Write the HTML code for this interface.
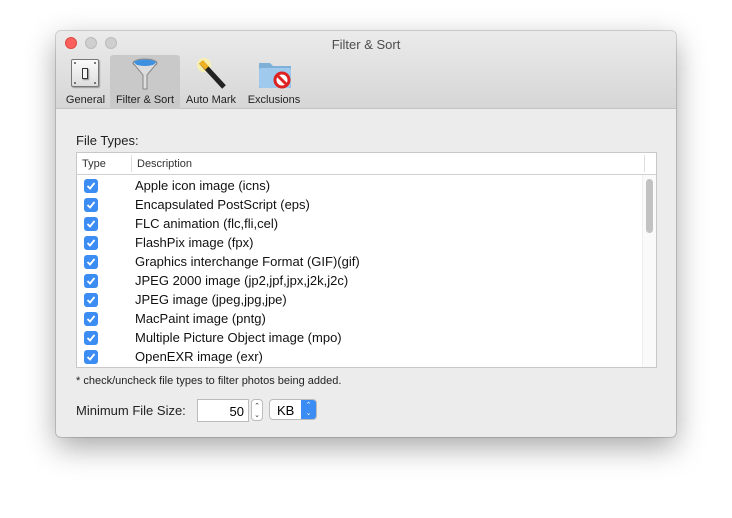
<!DOCTYPE html>
<html><head><meta charset="utf-8"><style>
*{margin:0;padding:0;box-sizing:border-box}
body{width:732px;height:518px;background:#fff;font-family:"Liberation Sans",sans-serif;position:relative;overflow:hidden}
.win{position:absolute;left:56px;top:31px;width:620px;height:406px;background:#ececec;border-radius:5px;box-shadow:0 10px 30px rgba(0,0,0,.35),0 0 0 1px rgba(0,0,0,.15);overflow:hidden}
.bar{position:absolute;left:0;top:0;width:620px;height:78px;background:linear-gradient(#ebebeb,#d6d6d6);border-bottom:1px solid #c4c4c4}
.title{position:absolute;top:6px;width:100%;text-align:center;font-size:13px;color:#4d4d4d}
.dot{position:absolute;top:6px;width:12px;height:12px;border-radius:50%}
.tab{position:absolute;top:24px;height:54px;font-size:11px;color:#222;text-align:center}
.tab span{position:absolute;bottom:3px;left:0;right:0}
.sel{background:#c9c9c9;border-radius:3px 3px 0 0}
.lbl{position:absolute;font-size:13px;color:#222}
.table{position:absolute;left:20px;top:121px;width:581px;height:216px;background:#fff;border:1px solid #c8c8c8}
.hdr{height:22px;border-bottom:1px solid #d0d0d0;font-size:11px;color:#333;position:relative}
.row{position:absolute;left:0;height:19px;font-size:13px;color:#111}
.cb{position:absolute;left:7px;top:3px;width:14px;height:14px;border-radius:3px;background:#3b8df4}
.cb svg{position:absolute;left:2px;top:2px}
.row .t{position:absolute;left:58px;top:2px;white-space:nowrap}
.sc{position:absolute;width:2px;height:2px;border-radius:50%;background:#555}
</style></head><body>
<div class="win">
<div class="bar">
<div class="dot" style="left:9px;background:#fc605c;border:1px solid #de4a44"></div>
<div class="dot" style="left:29px;background:#cfcfcf;border:1px solid #bbb"></div>
<div class="dot" style="left:49px;background:#cfcfcf;border:1px solid #bbb"></div>
<div class="title">Filter &amp; Sort</div>
<div class="tab" style="left:7px;width:45px">
<div style="position:absolute;left:8px;top:4px;width:28px;height:28px;background:linear-gradient(#fafafa,#ddd);border:1px solid #777;border-radius:2px;box-shadow:1px 1px 1px rgba(0,0,0,.3)">
<div class="sc" style="left:2px;top:2px"></div><div class="sc" style="right:2px;top:2px"></div><div class="sc" style="left:2px;bottom:2px"></div><div class="sc" style="right:2px;bottom:2px"></div>
<div style="position:absolute;left:10px;top:8px;width:6px;height:11px;border:1px solid #333;background:#f4f4f4;box-shadow:1px 1px 1px rgba(0,0,0,.4)"></div></div>
<span>General</span></div>
<div class="tab sel" style="left:54px;width:70px">
<svg style="position:absolute;left:20px;top:3px" width="30" height="32"><ellipse cx="15" cy="5" rx="12" ry="4" fill="#4aa0e8" stroke="#888"/><path d="M3 5 L13 17 L13 31 L17 31 L17 17 L27 5" fill="#ddd" stroke="#888"/><ellipse cx="15" cy="5" rx="10" ry="3" fill="#3d8fe0"/></svg>
<span>Filter &amp; Sort</span></div>
<div class="tab" style="left:126px;width:58px">
<svg style="position:absolute;left:12px;top:2px" width="34" height="34"><circle cx="10" cy="8" r="7" fill="#fff3a0" opacity=".8"/><line x1="7" y1="5" x2="30" y2="30" stroke="#222" stroke-width="5"/><line x1="7" y1="5" x2="13" y2="11" stroke="#f0b020" stroke-width="5"/></svg>
<span>Auto Mark</span></div>
<div class="tab" style="left:186px;width:64px">
<svg style="position:absolute;left:16px;top:4px" width="34" height="30"><path d="M1 4 h11 l3 3 h18 v22 h-32z" fill="#7fb0d8"/><rect x="1" y="9" width="32" height="20" rx="2" fill="#9fcaee"/><circle cx="24" cy="21" r="7" fill="#fff" stroke="#d22" stroke-width="3"/><line x1="19" y1="16" x2="29" y2="26" stroke="#d22" stroke-width="3"/></svg>
<span>Exclusions</span></div>
</div>
<div class="lbl" style="left:20px;top:102px">File Types:</div>
<div class="table">
<div class="hdr"><span style="position:absolute;left:5px;top:5px">Type</span><div style="position:absolute;left:54px;top:2px;height:17px;border-left:1px solid #ddd"></div><span style="position:absolute;left:60px;top:5px">Description</span><div style="position:absolute;left:567px;top:2px;height:17px;border-left:1px solid #ddd"></div></div>
<div style="position:absolute;right:0;top:22px;width:14px;height:192px;background:#fafafa;border-left:1px solid #eee"><div style="position:absolute;left:3px;top:4px;width:7px;height:54px;border-radius:4px;background:#c2c2c2"></div></div>
<div class="row" style="top:23px"><div class="cb"><svg width="10" height="10"><path d="M1.5 5 L4 7.5 L8.5 2" stroke="#fff" stroke-width="1.8" fill="none"/></svg></div><span class="t">Apple icon image (icns)</span></div>
<div class="row" style="top:42px"><div class="cb"><svg width="10" height="10"><path d="M1.5 5 L4 7.5 L8.5 2" stroke="#fff" stroke-width="1.8" fill="none"/></svg></div><span class="t">Encapsulated PostScript (eps)</span></div>
<div class="row" style="top:61px"><div class="cb"><svg width="10" height="10"><path d="M1.5 5 L4 7.5 L8.5 2" stroke="#fff" stroke-width="1.8" fill="none"/></svg></div><span class="t">FLC animation (flc,fli,cel)</span></div>
<div class="row" style="top:80px"><div class="cb"><svg width="10" height="10"><path d="M1.5 5 L4 7.5 L8.5 2" stroke="#fff" stroke-width="1.8" fill="none"/></svg></div><span class="t">FlashPix image (fpx)</span></div>
<div class="row" style="top:99px"><div class="cb"><svg width="10" height="10"><path d="M1.5 5 L4 7.5 L8.5 2" stroke="#fff" stroke-width="1.8" fill="none"/></svg></div><span class="t">Graphics interchange Format (GIF)(gif)</span></div>
<div class="row" style="top:118px"><div class="cb"><svg width="10" height="10"><path d="M1.5 5 L4 7.5 L8.5 2" stroke="#fff" stroke-width="1.8" fill="none"/></svg></div><span class="t">JPEG 2000 image (jp2,jpf,jpx,j2k,j2c)</span></div>
<div class="row" style="top:137px"><div class="cb"><svg width="10" height="10"><path d="M1.5 5 L4 7.5 L8.5 2" stroke="#fff" stroke-width="1.8" fill="none"/></svg></div><span class="t">JPEG image (jpeg,jpg,jpe)</span></div>
<div class="row" style="top:156px"><div class="cb"><svg width="10" height="10"><path d="M1.5 5 L4 7.5 L8.5 2" stroke="#fff" stroke-width="1.8" fill="none"/></svg></div><span class="t">MacPaint image (pntg)</span></div>
<div class="row" style="top:175px"><div class="cb"><svg width="10" height="10"><path d="M1.5 5 L4 7.5 L8.5 2" stroke="#fff" stroke-width="1.8" fill="none"/></svg></div><span class="t">Multiple Picture Object image (mpo)</span></div>
<div class="row" style="top:194px"><div class="cb"><svg width="10" height="10"><path d="M1.5 5 L4 7.5 L8.5 2" stroke="#fff" stroke-width="1.8" fill="none"/></svg></div><span class="t">OpenEXR image (exr)</span></div>
</div>
<div class="lbl" style="left:20px;top:344px;font-size:11px">* check/uncheck file types to filter photos being added.</div>
<div class="lbl" style="left:20px;top:372px">Minimum File Size:</div>
<div style="position:absolute;left:141px;top:368px;width:52px;height:23px;background:#fff;border:1px solid #bbb;font-size:13px;text-align:right;padding:4px 4px 0 0">50</div>
<div style="position:absolute;left:195px;top:368px;width:12px;height:22px;background:#fff;border:1px solid #bbb;border-radius:4px;font-size:7px;line-height:9px;text-align:center;padding-top:2px;color:#333">⌃<br>⌄</div>
<div style="position:absolute;left:213px;top:368px;width:48px;height:21px;background:#fff;border:1px solid #bbb;border-radius:4px;font-size:13px;padding:3px 0 0 7px;overflow:hidden">KB<div style="position:absolute;right:0;top:0;width:15px;height:21px;background:#3b8df4;color:#fff;font-size:7px;line-height:8px;text-align:center;padding-top:2px">⌃<br>⌄</div></div>
</div>
</body></html>
